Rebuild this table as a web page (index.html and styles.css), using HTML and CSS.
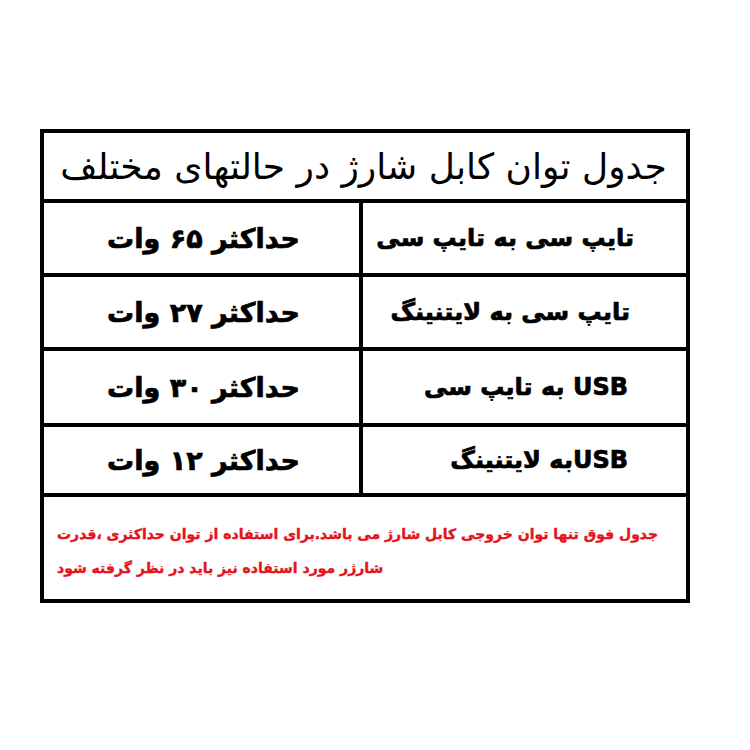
FILE: index.html
```html
<!DOCTYPE html>
<html lang="fa">
<head>
<meta charset="utf-8">
<title>جدول توان کابل شارژ</title>
<link rel="stylesheet" href="styles.css">
</head>
<body>
<div class="box" dir="rtl">
  <div class="title">جدول توان کابل شارژ در حالتهای مختلف</div>
  <div class="row r1">
    <div class="cell type">تایپ سی به تایپ سی</div>
    <div class="cell power">حداکثر ۶۵ وات</div>
  </div>
  <div class="row r2">
    <div class="cell type">تایپ سی به لایتنینگ</div>
    <div class="cell power">حداکثر ۲۷ وات</div>
  </div>
  <div class="row r3">
    <div class="cell type">USB به تایپ سی</div>
    <div class="cell power">حداکثر ۳۰ وات</div>
  </div>
  <div class="row r4">
    <div class="cell type">USBبه لایتنینگ</div>
    <div class="cell power">حداکثر ۱۲ وات</div>
  </div>
  <div class="note">جدول فوق تنها توان خروجی کابل شارژ می باشد.برای استفاده از توان حداکثری ،قدرت<br>شارژر مورد استفاده نیز باید در نظر گرفته شود</div>
</div>
</body>
</html>
```

FILE: styles.css
```css
html, body {
  margin: 0;
  padding: 0;
  background: #ffffff;
}
body {
  font-family: "DejaVu Sans", sans-serif;
  color: #000000;
  direction: ltr;
}
.box {
  box-sizing: border-box;
  width: 650px;
  height: 474px;
  margin: 129px 0 0 40px;
  border: 4px solid #000;
  display: flex;
  flex-direction: column;
  direction: rtl;
}
.title {
  height: 66px;
  border-bottom: 4px solid #000;
  display: flex;
  align-items: center;
  justify-content: center;
  font-size: 36px;
  font-weight: normal;
  padding-right: 3px;
}
.row {
  display: grid;
  grid-template-columns: 327px 311px;
  border-bottom: 4px solid #000;
}
.r1, .r2 { height: 70px; }
.r3 { height: 72px; }
.r4 { height: 66px; }
.cell {
  display: flex;
  align-items: center;
  font-weight: bold;
  -webkit-text-stroke: 0.7px #000;
  white-space: nowrap;
}
.type {
  justify-content: flex-start;
  padding-right: 56px;
  border-left: 4px solid #000;
  font-size: 24px;
}
.r1 .type { padding-right: 52px; }
.r3 .type, .r4 .type { padding-right: 58px; }
.power {
  justify-content: center;
  font-size: 27px;
}
.note {
  flex: 1;
  display: flex;
  flex-direction: column;
  justify-content: center;
  text-align: left;
  padding-left: 13px;
  padding-top: 5px;
  color: #e3141c;
  font-weight: bold;
  font-size: 14px;
  -webkit-text-stroke: 0.4px #e3141c;
  line-height: 34px;
  white-space: nowrap;
}
```
